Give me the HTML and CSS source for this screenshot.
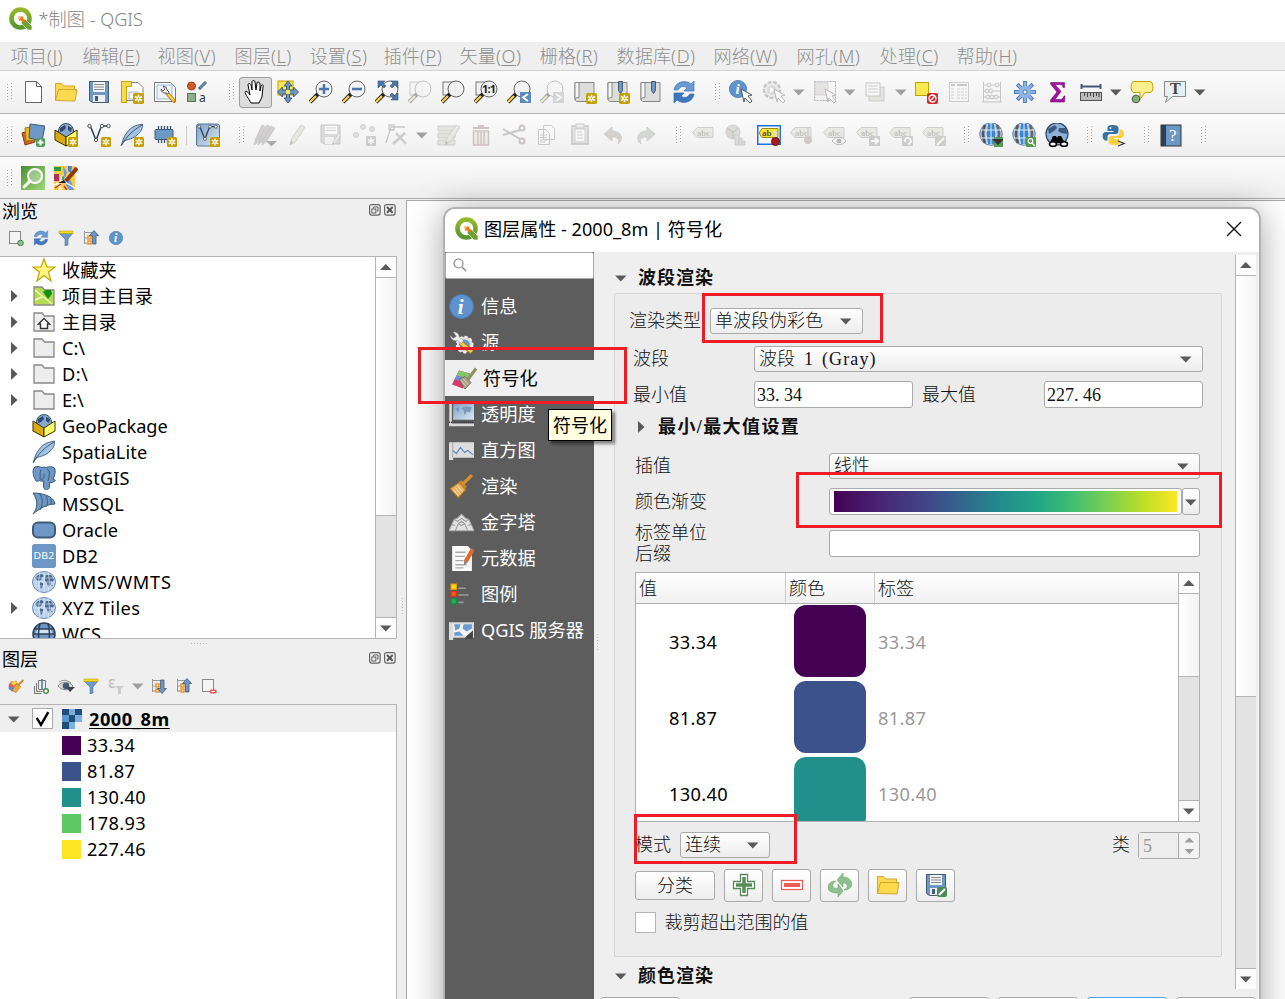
FILE: index.html
```html
<!DOCTYPE html>
<html lang="zh-CN">
<head>
<meta charset="utf-8">
<title>*制图 - QGIS</title>
<link rel="stylesheet" href="styles.css">
</head>
<body>
<svg class="defs" width="0" height="0">
<defs>
<linearGradient id="gq" x1="0" y1="0" x2="0" y2="1"><stop offset="0" stop-color="#95b82a"/><stop offset="1" stop-color="#589632"/></linearGradient>
<linearGradient id="gg" x1="0" y1="0" x2="1" y2="1"><stop offset="0" stop-color="#4d8f35"/><stop offset="1" stop-color="#9fd978"/></linearGradient>
<linearGradient id="gv" x1="0" y1="0" x2="1" y2="1"><stop offset="0" stop-color="#7fa3c9"/><stop offset="1" stop-color="#dbe7f3"/></linearGradient>
<linearGradient id="gs" x1="0" y1="0" x2="1" y2="1"><stop offset="0" stop-color="#ff6"/><stop offset="1" stop-color="#ffee9a"/></linearGradient>
<symbol id="grip" viewBox="0 0 15 24"><path d="M5.500 4v17M9.500 3v17" stroke="#a8a8a8" stroke-dasharray="1 2"/></symbol>
<symbol id="down" viewBox="0 0 12 12"><path d="M0 3.500h11.500l-5.750 6z" fill="#5a5a5a"/></symbol>
<symbol id="downg" viewBox="0 0 12 12"><path d="M0 3.500h11.500l-5.750 6z" fill="#a0a0a0"/></symbol>
<symbol id="up" viewBox="0 0 12 12"><path d="M0 9h11.500l-5.750-6z" fill="#5a5a5a"/></symbol>
<symbol id="right" viewBox="0 0 12 12"><path d="M3 0v12l6.500-6z" fill="#5a5a5a"/></symbol>
<symbol id="star" viewBox="0 0 10 10"><rect width="10" height="10" rx="1.500" fill="#c4a000"/><path d="M5 1.500v7M1.800 3.200l6.400 3.600M8.200 3.200L1.800 6.800" stroke="#fff" stroke-width="1.400"/><circle cx="5" cy="5" r=".8" fill="#c4a000"/></symbol>
<symbol id="q" viewBox="0 0 24 24"><circle cx="11.500" cy="11.500" r="9" fill="none" stroke="url(#gq)" stroke-width="4.600"/><path d="M13 13l3-1 7 7v4h-4l-7-7z" fill="#6f9f35" stroke="#fff" stroke-width=".6"/><path d="M9.500 9.500h5l-.5 1.800 2.500 2.500-2 2-2.500-2.500-2 .7z" fill="#ee7913"/><path d="M9.500 9.500h3l-2.500 3.500z" fill="#f9c46b"/></symbol>
<symbol id="new" viewBox="0 0 24 24"><path d="M4.500 1.500h11l5 5v16h-16zM15.500 1.500v5h5" fill="#fff" stroke="#666"/></symbol>
<symbol id="open" viewBox="0 0 24 24"><path d="M1.500 20.500V3.500h6l2 2.500h11v4h2.500l-2 11z" fill="#fcd94f" stroke="#d4a72c"/><path d="M1.500 20.500L4.500 9.500h18.500" fill="none" stroke="#d4a72c"/></symbol>
<symbol id="save" viewBox="0 0 24 24"><path d="M2.500 1.500h19v21h-16l-3-2z" fill="#6d97c4" stroke="#415a75"/><rect x="6" y="2" width="12" height="10" fill="#f4f4f4"/><path d="M7 4.500h10M7 7h10M7 9.500h10" stroke="#888"/><rect x="6" y="15" width="12" height="7" fill="#eee"/><rect x="8" y="16" width="3" height="5" fill="#415a75"/></symbol>
<symbol id="layout" viewBox="0 0 24 24"><path d="M4 2.500h14l5 5v13H4z" fill="#fff" stroke="#888"/><path d="M1.500 1.500h10v5h-5v16h-5z" fill="#fcd94f" stroke="#c4a000"/><path d="M9 12h9v7H9z" fill="none" stroke="#aab"/><use href="#star" x="13" y="13" width="11" height="11"/></symbol>
<symbol id="mgr" viewBox="0 0 24 24"><path d="M1.500 2.500h16l5 5v14h-21z" fill="#fff" stroke="#777"/><rect x="4" y="5" width="15" height="14" fill="#eef3fa" stroke="#9db7d8"/><path d="M14 13l7 8" stroke="#b8860b" stroke-width="4" stroke-linecap="round"/><path d="M14 13l7 8" stroke="#f0d060" stroke-width="2"/><path d="M8 9a4 4 0 0 0 5 4l2 1 1-2-2-2a4 4 0 0 0-4-4l2 3-2 2z" fill="#eee" stroke="#666"/></symbol>
<symbol id="style" viewBox="0 0 24 24"><circle cx="5.500" cy="6" r="4" fill="#d45a2a" stroke="#9c3f1a"/><path d="M13 9l7-7" stroke="#415a75" stroke-width="3"/><path d="M14 8l6-6" stroke="#6d97c4" stroke-width="1.500"/><rect x="1.500" y="13.500" width="8" height="8" fill="#8cb08c" stroke="#4b7a4b"/><text x="13" y="22" font-size="12" fill="#333">a</text></symbol>
<symbol id="hand" viewBox="0 0 24 24"><path d="M8 23C6 19 2 14 2 12c1-2 3 0 5 3L5 5c0-2 2-2 3 0l1 5V2c0-2 3-2 3 0l1 8 1-7c0-2 3-1 3 1v7l1-5c1-2 3-1 2 1l-1 10-3 6z" fill="#fff" stroke="#000"/></symbol>
<symbol id="panm" viewBox="0 0 24 24"><rect x="2" y="1" width="15" height="14" fill="#fce94f" stroke="#c4a000"/><path d="M12 1l4 5h-2.500v4h4V7l5 5-5 5v-3h-4v4H16l-4 5-4-5h2.500v-4h-4v3l-5-5 5-5v3h4V6H8z" fill="#6d97c4" stroke="#415a75"/><rect x="10" y="10" width="4" height="4" fill="#fce94f"/></symbol>
<symbol id="mag" viewBox="0 0 24 24"><path d="M9 14l-8 8" stroke="#222" stroke-width="4"/><path d="M7 16l-6 6" stroke="#ffd24a" stroke-width="2.300"/><circle cx="15" cy="9" r="8" fill="#f2f2f2" fill-opacity=".9" stroke="#666"/></symbol>
<symbol id="zin" viewBox="0 0 24 24"><use href="#mag"/><path d="M15 4v10M10 9h10" stroke="#4a76ab" stroke-width="2.500"/></symbol>
<symbol id="zout" viewBox="0 0 24 24"><use href="#mag"/><path d="M10 9h10" stroke="#4a76ab" stroke-width="2.500"/></symbol>
<symbol id="zfull" viewBox="0 0 24 24"><use href="#mag"/><path d="M3 1h7L8 3l3 3-2 2-3-3-3 3zM23 1h-7l2 2-3 3 2 2 3-3 3 3zM23 20h-7l2-2-3-3 2-2 3 3 3-3z" fill="#4a76ab" stroke="#2f4f76" stroke-width=".6"/></symbol>
<symbol id="zlay" viewBox="0 0 24 24"><rect x="2" y="2" width="12" height="13" fill="#f1f1f1" stroke="#777"/><use href="#mag"/></symbol>
<symbol id="znat" viewBox="0 0 24 24"><use href="#zlay"/><text x="8" y="13" font-size="11" font-weight="bold" fill="#222" textLength="14">1:1</text></symbol>
<symbol id="zlast" viewBox="0 0 24 24"><use href="#mag"/><rect x="13" y="12" width="11" height="11" fill="#5b8abf"/><path d="M21 14l-5 3.500 5 3.500" fill="none" stroke="#fff" stroke-width="2"/></symbol>
<symbol id="znext" viewBox="0 0 24 24"><use href="#mag"/><rect x="13" y="12" width="11" height="11" fill="#8aa0b5"/><path d="M16 14l5 3.500-5 3.500" fill="none" stroke="#fff" stroke-width="2"/></symbol>
<symbol id="book" viewBox="0 0 24 24"><path d="M2 2.500h19v19H4c-1 0-2-1-2-3z" fill="#ddd" stroke="#888"/><path d="M2 2.500h4v15c-3 0-4 1-4 2z" fill="#f6f6f6" stroke="#888"/></symbol>
<symbol id="bk1" viewBox="0 0 24 24"><use href="#book"/><use href="#star" x="13" y="13" width="11" height="11"/></symbol>
<symbol id="ribbon" viewBox="0 0 24 24"><path d="M12.500 1.500h4v9l-2 3-2-3z" fill="#6d97c4" stroke="#415a75"/></symbol>
<symbol id="bk2" viewBox="0 0 24 24"><use href="#book"/><use href="#ribbon"/><use href="#star" x="13" y="13" width="11" height="11"/></symbol>
<symbol id="bk3" viewBox="0 0 24 24"><use href="#book"/><use href="#ribbon"/></symbol>
<symbol id="refresh" viewBox="0 0 24 24"><path d="M2 10C3 2 13 -1 19 4l3-3v10H12l3-3C11 5 8 7 6 10z" fill="#6a9ad6" stroke="#4577b4" stroke-width=".7"/><path d="M22 14c-1 8-11 11-17 6l-3 3V13h10l-3 3c4 3 7 1 9-2z" fill="#3f78be" stroke="#3568a8" stroke-width=".7"/></symbol>
<symbol id="cursor" viewBox="0 0 24 24"><path d="M12 9l11 6-4 1 4 5-2 2-5-5-1 4z" fill="#fff" stroke="#555"/></symbol>
<symbol id="info" viewBox="0 0 24 24"><circle cx="12" cy="12" r="11.500" fill="#5f93cd" stroke="#4a7ab0"/><text x="8.500" y="19" font-size="20" font-style="italic" font-weight="bold" fill="#fff" class="serif">i</text></symbol>
<symbol id="ident" viewBox="0 0 24 24"><use href="#info" x="0" y="0" width="18" height="18"/><use href="#cursor"/></symbol>
<symbol id="act" viewBox="0 0 24 24"><circle cx="10" cy="10" r="8" fill="#ddd" stroke="#777" stroke-width="2.500" stroke-dasharray="4 1.500"/><circle cx="10" cy="10" r="5" fill="#aaa"/><path d="M8 7l5 3-5 3z" fill="#fff"/><use href="#cursor"/></symbol>
<symbol id="sel" viewBox="0 0 24 24"><rect x="1.500" y="1.500" width="21" height="19" fill="none" stroke="#333" stroke-dasharray="2 1"/><rect x="2" y="2" width="13" height="13" fill="#ccc7ab" stroke="#999"/><use href="#cursor"/></symbol>
<symbol id="selv" viewBox="0 0 24 24"><rect x="5" y="7" width="15" height="14" fill="#cfc9a8" stroke="#888"/><rect x="2" y="3" width="14" height="13" fill="#fafafa" stroke="#777"/><path d="M4 6h10M4 9h10M4 12h10" stroke="#888"/></symbol>
<symbol id="desel" viewBox="0 0 24 24"><rect x="1.500" y="2.500" width="13" height="13" fill="#fce94f" stroke="#c4a000"/><rect x="13" y="13" width="11" height="11" rx="2" fill="#d42a2a"/><circle cx="18.500" cy="18.500" r="3.500" fill="none" stroke="#fff" stroke-width="1.300"/><path d="M16 21l5-5" stroke="#fff" stroke-width="1.300"/></symbol>
<symbol id="tbl" viewBox="0 0 24 24"><rect x="2.500" y="2.500" width="19" height="19" fill="#fafafa" stroke="#888"/><path d="M4 5h4M10 5h10" stroke="#777" stroke-width="2"/><path d="M4 9h4M10 9h10M4 12h4M10 12h10M4 15h4M10 15h10M4 18h4M10 18h10" stroke="#999" stroke-dasharray="3 1"/></symbol>
<symbol id="abac" viewBox="0 0 24 24"><path d="M3.500 2v19M20.500 2v19M2 22h20M3 5h18M3 11h18M3 17h18" stroke="#777" fill="none"/><g fill="#ddd" stroke="#777"><circle cx="9" cy="5" r="2"/><circle cx="17" cy="5" r="2"/><circle cx="7" cy="11" r="2"/><circle cx="11" cy="11" r="2"/><circle cx="8" cy="17" r="2"/><circle cx="12" cy="17" r="2"/><circle cx="16" cy="17" r="2"/></g></symbol>
<symbol id="gear" viewBox="0 0 24 24"><path d="M12 1v22M1 12h22M4.200 4.200l15.600 15.600M19.800 4.200L4.200 19.800" stroke="#4a7dbd" stroke-width="3.800"/><path d="M12 2v20M2 12h20M5 5l14 14M19 5L5 19" stroke="#8db4e2" stroke-width="2"/><circle cx="12" cy="12" r="6" fill="#8db4e2"/><circle cx="12" cy="12" r="2" fill="#fff" stroke="#4a7dbd"/></symbol>
<symbol id="sigma" viewBox="0 0 24 24"><path d="M4.500 2.500h14v5h-1.500c0-2-1-3-3-3H9l6 7-6 8h5c2 0 3-1 4-3.500h1l-.500 6h-14v-2l6.500-8-6.500-8z" fill="#a3129f" stroke="#75106f" stroke-width=".6"/></symbol>
<symbol id="meas" viewBox="0 0 24 24"><path d="M2 6.500h20M2.500 4v5M21.500 4v5" stroke="#415a75" stroke-width="2"/><rect x="1.500" y="12.500" width="21" height="8" fill="#bbb" stroke="#555"/><path d="M5.500 13v3M8.500 13v4M11.500 13v3M14.500 13v4M17.500 13v3M20 13v4" stroke="#444"/></symbol>
<symbol id="tip" viewBox="0 0 24 24"><path d="M4 1.500h16c4 0 4 11 0 11h-5l-5 7v-7H4c-4 0-4-11 0-11z" fill="#fbee8e" stroke="#c4a000"/><circle cx="6" cy="19" r="3.800" fill="#7fb07f" stroke="#4a5a4a"/></symbol>
<symbol id="anno" viewBox="0 0 24 24"><path d="M1.500 1.500h21v15h-13l-7 6 2-6h-3z" fill="#e6eff2" stroke="#888"/><text x="7" y="14" font-size="16" font-weight="bold" fill="#444" class="serif">T</text></symbol>
<symbol id="ds" viewBox="0 0 24 24"><path d="M1 10l10-3 3 12-10 3z" fill="#d0602a" stroke="#8c3a14"/><path d="M4 5l11-2 1 14-11 1z" fill="#f0b81f" stroke="#9c7a10"/><path d="M9 1l15 2-3 15-13-3z" fill="#6d97c4" stroke="#415a75"/><rect x="15" y="15" width="9" height="9" rx="2" fill="#4e9a5a"/><path d="M19.500 16.500v6M16.500 19.500h6" stroke="#fff" stroke-width="2"/></symbol>
<symbol id="gpk" viewBox="0 0 24 24"><circle cx="12" cy="8" r="7.500" fill="#86a8d0" stroke="#31506f"/><path d="M6 5l5-3 1 3-3 3-3 1zM14 3l4 2-1 4-3-2z" fill="#2f4b6c"/><path d="M1 7l11 7v9L1 17z" fill="#d9aa10" stroke="#3c3000"/><path d="M23 7l-11 7v9l11-6z" fill="#ffff70" stroke="#3c3000"/></symbol>
<symbol id="gpkn" viewBox="0 0 24 24"><use href="#gpk"/><use href="#star" x="14" y="14" width="10" height="10"/></symbol>
<symbol id="shp" viewBox="0 0 24 24"><path d="M3 3c2 3 4 10 6 14 2-4 4-12 6-14l6 0" fill="none" stroke="#2e4056" stroke-width="1.500"/><g fill="#fff" stroke="#555"><circle cx="2.500" cy="3" r="1.700"/><circle cx="9" cy="17" r="1.700"/><circle cx="15" cy="3" r="1.700"/><circle cx="21.500" cy="3" r="1.700"/></g></symbol>
<symbol id="shpn" viewBox="0 0 24 24"><use href="#shp"/><use href="#star" x="14" y="14" width="10" height="10"/></symbol>
<symbol id="feather" viewBox="0 0 24 24"><path d="M1.500 22C3 16 6 8 13 4c3-2 6-2 9.500-3 0 6-2 8-4 9.500C15 15 10 16 5 17.500z" fill="#a3c3e4" stroke="#415a75" stroke-width=".9"/><path d="M1 23C6 14 12 8 22 2" fill="none" stroke="#415a75"/></symbol>
<symbol id="feathn" viewBox="0 0 24 24"><use href="#feather"/><use href="#star" x="14" y="14" width="10" height="10"/></symbol>
<symbol id="chip" viewBox="0 0 24 24"><path d="M5.500 3v17M8.500 3v17M11.500 3v17M14.500 3v17M17.500 3v17" stroke="#415a75" stroke-width="1.400"/><rect x="2" y="6.500" width="18" height="10" rx="1" fill="#6d97c4" stroke="#415a75"/><use href="#star" x="14" y="14" width="10" height="10"/></symbol>
<symbol id="virt" viewBox="0 0 24 24"><rect x=".5" y="1" width="23" height="22" rx="2" fill="url(#gv)" stroke="#53769c"/><use href="#shp" x="1" y="1" width="21" height="21"/><use href="#star" x="14" y="14" width="10" height="10"/></symbol>
<symbol id="pen" viewBox="0 0 24 24"><path d="M4 22l2-7L15 2l4 2-9 14z" fill="#d8d0ac" stroke="#888"/><path d="M4 22l1-4 2 2z" fill="#555"/></symbol>
<symbol id="pens" viewBox="0 0 24 24"><g fill="#998a8a" stroke="#777" stroke-width=".8"><path d="M1 22l2-7L9 2l4 2-6 14z"/><path d="M5 22l2-7 7-13 4 2-8 14z"/><path d="M9 22l2-7 7-12 4 2-8 13z"/></g><path d="M13 18h11l-5.500 5.500z" fill="#333"/></symbol>
<symbol id="saved" viewBox="0 0 24 24"><path d="M2 2h19v19H5l-3-2z" fill="#aaa" stroke="#777"/><rect x="6" y="3" width="12" height="8" fill="#fff"/><path d="M7 5h10M7 7.500h10" stroke="#999"/><rect x="6" y="14" width="9" height="7" fill="#eee"/><use href="#pen" x="11" y="9" width="14" height="14"/></symbol>
<symbol id="pts" viewBox="0 0 24 24"><g fill="#bbb" stroke="#888"><circle cx="4" cy="12" r="2.500"/><circle cx="11" cy="4" r="2.500"/><circle cx="20" cy="6" r="2.500"/></g><rect x="14" y="13" width="10" height="10" rx="1" fill="#8a8a70"/><path d="M19 14.500v7M16 16.300l6 3.400M22 16.300l-6 3.400" stroke="#fff" stroke-width="1.400"/></symbol>
<symbol id="vert" viewBox="0 0 24 24"><path d="M1 20L6 4h14M4 2h5v5H4z" fill="none" stroke="#777" stroke-width="1.300"/><path d="M11 10l10 11M20 10L8 21" stroke="#888" stroke-width="2.600"/></symbol>
<symbol id="medit" viewBox="0 0 24 24"><path d="M2 3h17v5H2zM2 10h17v5H2zM2 17h17v5H2z" fill="#c9c5a5" stroke="#888"/><use href="#pen" x="5"/></symbol>
<symbol id="trash" viewBox="0 0 24 24"><path d="M4.500 8h15v14h-15zM9 8v14M12 8v14M15 8v14" fill="#e8d4d4" stroke="#a66" stroke-width="1.500"/><path d="M4 5h16M9 3h6" stroke="#a66" stroke-width="2"/></symbol>
<symbol id="cut" viewBox="0 0 24 24"><path d="M1 6l17 10M1 12l17-5" stroke="#777" stroke-width="2"/><circle cx="20" cy="5" r="2.500" fill="none" stroke="#966" stroke-width="2"/><circle cx="20" cy="18" r="2.500" fill="none" stroke="#966" stroke-width="2"/></symbol>
<symbol id="copy" viewBox="0 0 24 24"><path d="M8.500 2.500h8l3 3v11h-11zM3.500 6.500h7l4 4v11h-11z" fill="#fafafa" stroke="#777"/><path d="M5 12h7M5 14.500h7M5 17h7M5 19h5" stroke="#888"/></symbol>
<symbol id="paste" viewBox="0 0 24 24"><rect x="4" y="3" width="16" height="18" fill="#ccc" stroke="#777" stroke-width="1.500"/><rect x="7" y="6" width="10" height="13" fill="#fff" stroke="#888"/><rect x="8" y="1" width="8" height="4" fill="#ddd" stroke="#777"/><path d="M9 9h5M9 12h6M9 15h6" stroke="#888"/></symbol>
<symbol id="undo" viewBox="0 0 24 24"><path d="M3 11l8-7v4c10 0 12 9 6 13 2-5 0-7-6-7v4z" fill="#a9907c" stroke="#888"/></symbol>
<symbol id="redo" viewBox="0 0 24 24"><path d="M21 11l-8-7v4C3 8 1 17 7 21c-2-5 0-7 6-7v4z" fill="#90a990" stroke="#888"/></symbol>
<symbol id="tag" viewBox="0 0 24 24"><path d="M6 4.500h16v10H6l-4.500-5z" fill="#d6d4a8" stroke="#888"/><text x="6" y="12.500" font-size="8.500" font-weight="bold" fill="#666" class="serif">abc</text></symbol>
<symbol id="diag" viewBox="0 0 24 24"><circle cx="9" cy="9" r="7" fill="#a0b590" stroke="#888"/><path d="M9 9L3 5a7 7 0 0 0 6 11z" fill="#b59a9a"/><path d="M9 9L3 5M9 9l6-4M9 9v7" stroke="#666"/><path d="M11 22V12h4v10zM15 22v-7h3v7zM18 22v-4h3v4z" fill="#9bb" stroke="#888"/></symbol>
<symbol id="pin" viewBox="0 0 24 24"><rect x=".75" y="2.750" width="22.500" height="18.500" fill="#f8fbff" stroke="#1a73e8" stroke-width="1.500"/><path d="M5 5.500h16v9H5L2 10z" fill="#f8e63c" stroke="#a08c00"/><text x="5" y="13" font-size="9" font-weight="bold" fill="#554" class="serif">ab</text><path d="M18.500 8v10" stroke="#ddd" stroke-width="2.500"/><circle cx="18.500" cy="18.500" r="4" fill="#b01818" stroke="#701010"/></symbol>
<symbol id="tpin" viewBox="0 0 24 24"><use href="#tag" x="-1"/><circle cx="18" cy="17" r="4" fill="#a77"/><path d="M18 5v9" stroke="#999" stroke-width="2"/></symbol>
<symbol id="teye" viewBox="0 0 24 24"><use href="#tag" x="-1"/><path d="M9 18c4-5 10-5 14 0-4 5-10 5-14 0z" fill="#fff" stroke="#555"/><circle cx="16" cy="18" r="2.500" fill="#555"/></symbol>
<symbol id="tmov" viewBox="0 0 24 24"><use href="#tag" x="-1"/><rect x="13" y="13" width="11" height="10" fill="#888"/><path d="M15 18h7M19 15l3 3-3 3" fill="none" stroke="#fff" stroke-width="2"/></symbol>
<symbol id="trot" viewBox="0 0 24 24"><use href="#tag" x="-1"/><rect x="13" y="13" width="11" height="10" fill="#888"/><path d="M16 19a3 3 0 1 1 3 2" fill="none" stroke="#fff" stroke-width="2"/></symbol>
<symbol id="tedt" viewBox="0 0 24 24"><use href="#tag" x="-1"/><rect x="13" y="13" width="11" height="10" fill="#8f8e74"/><path d="M15 22l7-7" stroke="#fff" stroke-width="2"/></symbol>
<symbol id="globe" viewBox="0 0 24 24"><circle cx="12" cy="11" r="11.300" fill="#9dbfe6" stroke="#5a7190" stroke-width=".8"/><path d="M8.500 1h7q3 10 0 20h-7q-3-10 0-20z" fill="#3c86d0"/><path d="M6 2q-4 9 0 18" stroke="#555" stroke-width="2.500" fill="none"/><path d="M18 2q4 9 0 18" stroke="#666" stroke-width="2.500" fill="none"/><path d="M1.500 7h21M1.500 15h21M12 0v22M8.500 1q-3 10 0 20M15.500 1q3 10 0 20" stroke="#e4ecf5" fill="none"/></symbol>
<symbol id="gl1" viewBox="0 0 24 24"><use href="#globe"/><rect x="15" y="14" width="9" height="10" fill="#5a9a5a"/><path d="M13 16h12l-6 6z" fill="#333"/></symbol>
<symbol id="gl2" viewBox="0 0 24 24"><use href="#globe"/><rect x="14" y="14" width="10" height="10" rx="1" fill="#4e9a4e"/><circle cx="18.500" cy="18" r="2.300" fill="none" stroke="#fff" stroke-width="1.300"/><path d="M20 20l3 3" stroke="#fff" stroke-width="1.500"/></symbol>
<symbol id="gl3" viewBox="0 0 24 24"><circle cx="12" cy="11" r="11" fill="#8fb0d8" stroke="#2b4564" stroke-width="1.200"/><path d="M3 6l7-4 2 3-3 3-5 3zM14 5l7 0 1 6-6-1-3-2z" fill="#3a5a80"/><path d="M5 20l3-7h3l1 2 1-2h3l4 7z" fill="#000"/><ellipse cx="8" cy="21" rx="3.500" ry="2.300" fill="#fff" stroke="#000" stroke-width="1.600"/><ellipse cx="19" cy="21" rx="3.500" ry="2.300" fill="#fff" stroke="#000" stroke-width="1.600"/></symbol>
<symbol id="py" viewBox="0 0 24 24"><path d="M10.500 2c-4 0-5 1-5 3.500V8h6v1H4c-5 0-4 8-.5 8.500h2V14c0-2 1-3 3-3h5c2 0 3-1 3-3V5c0-2-2-3-6-3z" fill="#3572a5"/><path d="M12.500 22c4 0 5-1 5-3.500V16h-6v-1H19c4 0 4-8 0-8.500h-1.500V10c0 2-1 3-3 3h-5c-2 0-3 1-3 3v3c0 2 2 3 6 3z" fill="#ffd03a"/><circle cx="8.500" cy="5" r="1" fill="#fff"/><path d="M16 18l6 2.500-6 2.500" fill="none" stroke="#333" stroke-width="1.300"/></symbol>
<symbol id="help" viewBox="0 0 24 24"><rect x="2" y="2" width="20" height="21" fill="#6d97c4" stroke="#333"/><rect x="2" y="2" width="5" height="21" fill="#2d3f56"/><text x="10" y="18" font-size="17" fill="#fff" class="serif">?</text></symbol>
<symbol id="osm1" viewBox="0 0 24 24"><rect width="24" height="24" fill="url(#gg)"/><circle cx="14" cy="10" r="7" fill="#fff" fill-opacity=".3" stroke="#fff" stroke-width="2"/><path d="M9 15l-6 6" stroke="#fff" stroke-width="3" stroke-linecap="round"/></symbol>
<symbol id="osm2" viewBox="0 0 24 24"><rect width="21" height="24" fill="#f7cb45"/><path d="M9 0l4 6-2 6 6 3 3 9h-5l-4-7" fill="#6a9be8"/><path d="M14 0l4 0-1 7-3-2z" fill="#4a7fe0"/><path d="M0 1h7v4H0z" fill="#2a9a3a"/><path d="M0 8h5v7H0z" fill="#b03060"/><path d="M7 10h3v4H7z" fill="#3aa0a0"/><path d="M0 19l9-4 12 7M8 9l-3 15M2 17l6 7" stroke="#fff" fill="none" stroke-width="1.200"/><path d="M1 22l6-4M10 20l3 4" stroke="#c0392b" stroke-width="1.500"/><path d="M12 15L23 2" stroke="#8b3a10" stroke-width="4"/><path d="M10 14l-6 3 8 0z" fill="#222"/></symbol>
<symbol id="addl" viewBox="0 0 16 16"><rect x="1.500" y="1.500" width="11" height="12" fill="#f4f4f4" stroke="#888"/><circle cx="12.500" cy="13" r="2.800" fill="#8fbc8f" stroke="#4c8a4c"/></symbol>
<symbol id="filter" viewBox="0 0 16 16"><path d="M1 3h14l-5 6v6l-3 1V9z" fill="#6d97c4" stroke="#53769c" stroke-width=".6"/><path d="M1 1h14v2.500H1z" fill="#f2dc2a" stroke="#c4a000" stroke-width=".6"/></symbol>
<symbol id="tree" viewBox="0 0 16 16"><path d="M1.500 1v13M1 2.500h12M2 8h3M2 13h3" stroke="#999" fill="none"/><path d="M5 6h3v3H5zM5 11h3v3H5z" fill="#fff" stroke="#f0932a" stroke-width="1.500"/></symbol>
<symbol id="coll" viewBox="0 0 16 16"><use href="#tree"/><path d="M11 .5l4.500 5H13V14H9.500V5.500H6.500z" fill="#6d97c4" stroke="#415a75" stroke-width=".8"/></symbol>
<symbol id="expa" viewBox="0 0 16 16"><use href="#tree"/><path d="M11 15.500l4.500-5H13V2H9.500v8.500H6.500z" fill="#6d97c4" stroke="#415a75" stroke-width=".8"/></symbol>
<symbol id="reml" viewBox="0 0 16 16"><rect x="1.500" y="1.500" width="11" height="12" fill="#f4f4f4" stroke="#888"/><rect x="9" y="11.500" width="6.500" height="4" rx="1" fill="#f05a5a"/><path d="M10.500 13.500h3.500" stroke="#fff"/></symbol>
<symbol id="brush" viewBox="0 0 24 24"><path d="M1 10l4-5 8-1 1 9-6 6-7-2z" fill="#e85a5a"/><path d="M4 7l5-3 5 2-5 6z" fill="#f5d33a"/><path d="M1 14l4-2 4 5-3 4z" fill="#4a90d8"/><path d="M9 13l5-5 5 5-7 9-5-3z" fill="#e8a93c" stroke="#a8741c" stroke-width=".8"/><path d="M15 11l8-8" stroke="#c08a2a" stroke-width="3"/></symbol>
<symbol id="sym" viewBox="0 0 26 24"><path d="M1 18L8 4l11 3-7 15z" fill="#d43a6a"/><path d="M5.500 9L8 4l11 3-2.500 5z" fill="#7cc86a"/><path d="M3.500 13l2-4 11 3-2 4z" fill="#6a8ee0"/><path d="M8 13l6-3 6 6-6 6.500z" fill="#a8a288" stroke="#777058"/><path d="M10 14l5 6M12 12l5 6" stroke="#d0ccb8"/><path d="M17 13l8-11" stroke="#8e9064" stroke-width="3"/></symbol>
<symbol id="grp" viewBox="0 0 16 16"><path d="M5.500 2.500h7v9h-7zM3.500 5v8.500h6M1.500 8v7.500h7" fill="none" stroke="#777"/><path d="M9 1v10" stroke="#4a76ab" stroke-width="1.500"/><circle cx="13" cy="13" r="2.300" fill="#fff" stroke="#4c8a4c" stroke-width="1.500"/></symbol>
<symbol id="eye" viewBox="0 0 18 16"><path d="M1 8c4-5 11-5 15 0-4 5-11 5-15 0z" fill="#ddd" stroke="#888"/><circle cx="9" cy="8" r="3.300" fill="#415a75"/><path d="M2 4q6-4 12 1" fill="none" stroke="#999"/><path d="M9 9h9l-5 5z" fill="#444"/></symbol>
<symbol id="eps" viewBox="0 0 16 16"><text x="0" y="10" font-size="16" fill="#bbb">ε</text><path d="M7 8h9l-3 3v5h-3v-5z" fill="#ccc"/></symbol>
<symbol id="fav" viewBox="0 0 24 24"><path d="M12 1l3 8h8l-6.500 5 2.500 9-7-5.500L5 23l2.500-9L1 9h8z" fill="url(#gs)" stroke="#c4a000" stroke-width="1.200"/></symbol>
<symbol id="fold" viewBox="0 0 24 24"><path d="M2 21V3h8l2.500 3H22v15z" fill="#ededed" stroke="#888" stroke-width="1.300"/></symbol>
<symbol id="pfold" viewBox="0 0 24 24"><path d="M2 21V3h8l2.500 3H22v15z" fill="#b5dc50" stroke="#888" stroke-width="1.300"/><path d="M3 6l17 14M3 16l7-3" stroke="#eef8c8" stroke-width="1.500"/><path d="M11 8l3-2h5l1 4-4 5z" fill="#119011"/></symbol>
<symbol id="hfold" viewBox="0 0 24 24"><use href="#fold"/><path d="M6.500 14L12 8.500l5.500 5.500H15.500v4.500h-7V14z" fill="#fff" stroke="#333" stroke-width="1.400"/></symbol>
<symbol id="pg" viewBox="0 0 24 24"><path d="M3 1c3-1 5 0 7 0.500 1-.5 3-.5 4 0 3-1 7-1 8.500.5 1.500 3 .5 7-1.500 11l2.500 1.500-3 2-3 0v5c-1 3-5 3-6 0v-7c-1 1-3 1-4 0l-3 1C2 13-1 4 3 1z" fill="#6d97c4" stroke="#415a75"/><path d="M9 4c-2 3 0 6-1 9 2 1 4 0 4-3V8M15 3c4 2 2 7 1 12" fill="none" stroke="#415a75"/></symbol>
<symbol id="ms" viewBox="0 0 24 24"><path d="M1 1c9 0 21 3 22 11-8 0-16 5-22 10C6 16 6 8 1 1z" fill="#6d97c4" stroke="#415a75"/><path d="M8 2c3 5 3 11 0 16M14 4c2 4 2 8 0 11M19 7v6" fill="none" stroke="#415a75"/></symbol>
<symbol id="ora" viewBox="0 0 24 24"><rect x="1" y="4.500" width="22" height="15" rx="5" fill="#6d97c4" stroke="#415a75" stroke-width="2"/></symbol>
<symbol id="db2" viewBox="0 0 24 24"><rect width="24" height="24" rx="3" fill="#6d97c4"/><text x="1.500" y="15" font-size="9" fill="#fff" textLength="21" lengthAdjust="spacingAndGlyphs">DB2</text></symbol>
<symbol id="wms" viewBox="0 0 24 24"><ellipse cx="12" cy="12" rx="11.500" ry="10.500" fill="#b9d0ea" stroke="#6d8db2"/><path d="M3 8l3-3 4-1 2 2-2 2-1 2-3 1zM8 12l3 1 0 3-2 3-1-3zM14 5l5 0 3 4-1 3-2-1-1 5-2 1-1-4-2-2 0-3zM19 15l2 0-1 2z" fill="#4c6b93"/><path d="M2 8h20M1 12h22M2 16h20M8 2q-3 10 0 20M12 2v20M16 2q3 10 0 20" fill="none" stroke="#e4eef9" stroke-width=".6"/></symbol>
<symbol id="wcs" viewBox="0 0 24 24"><circle cx="12" cy="12" r="11" fill="#6d97c4" stroke="#2d4059" stroke-width="1.500"/><path d="M5 7h14l1 5H4z" fill="#d5e3f3"/><path d="M2 7h20M1 12h22M8 2q-3 10 0 20M16 2q3 10 0 20" fill="none" stroke="#2d4059" stroke-width="1.500"/></symbol>
<symbol id="raster" viewBox="0 0 20 20"><rect width="20" height="20" fill="#7db0e0"/><path d="M0 0h7v6H0zM13 0h7v6h-7zM7 6h6v7H7zM0 13h7v7H0z" fill="#1f4e79"/><path d="M13 13h7v7h-7z" fill="#efefef"/><path d="M0 6h7v7H0z" fill="#5b95cc"/></symbol>
<symbol id="src" viewBox="0 0 24 24"><circle cx="15" cy="14" r="7.500" fill="#ddd" stroke="#eee" stroke-width="2" stroke-dasharray="3 2"/><circle cx="15" cy="14" r="5" fill="#6d97c4"/><path d="M11 12l11 9" stroke="#a88520" stroke-width="5"/><path d="M11 12l11 9" stroke="#eacb5a" stroke-width="3"/><path d="M1 5c1 5 5 6 7 5l4 3 2-3-4-3c0-3-3-6-6-5l3 4-3 2z" fill="#eee" stroke="#777" stroke-width=".5"/></symbol>
<symbol id="trans" viewBox="0 0 24 24"><path d="M1.500 1v21M0 22h24" stroke="#d8d8d8" stroke-width="2.500"/><rect x="4" y="2" width="20" height="15" fill="url(#gv)"/><path d="M12 6l4-2 6 1-2 5-3-1-2 4-1-5zM6 6l4-1-1 5z" fill="#7d97b8"/><path d="M0 19.500h24" stroke="#334" stroke-width="1.500" stroke-dasharray="1 1"/></symbol>
<symbol id="hist" viewBox="0 0 24 24"><path d="M0 4h24v15H4v2H0z" fill="#ddd"/><path d="M3.500 4v15" stroke="#aaa"/><path d="M4 12l3 3 4-6 4 5 3-2 5 4" fill="none" stroke="#5d87b8" stroke-width="1.100"/></symbol>
<symbol id="rend" viewBox="0 0 24 24"><path d="M1 14l9-6 6 7-7 8z" fill="#e8b060" stroke="#a8741c"/><path d="M4 15l5 6M6 13l5 6M8 11l5 6" stroke="#f6d9a0"/><path d="M9 8l3-2 5 6-2 3z" fill="#c4842a"/><path d="M13 10l9-9" stroke="#d8902a" stroke-width="3"/></symbol>
<symbol id="pyr" viewBox="0 0 24 24"><path d="M0 20L5 9l3-1 4-4 4 4 3 1 5 11z" fill="#e2e2e2" stroke="#aaa"/><path d="M5 9l3 2 4-3 4 3 3-2M3 14l3 1M21 14l-3 1M6 20l3-7 3-2 3 2 3 7M9 13l3 2 3-2" fill="none" stroke="#999"/></symbol>
<symbol id="meta" viewBox="0 0 24 24"><path d="M3 0h15l4 4v20H3z" fill="#fafafa"/><path d="M6 6h10M6 10h9M6 14h8M6 18h11M6 21h8" stroke="#aaa" stroke-width="1.300"/><path d="M16 15l7-12" stroke="#e0682a" stroke-width="4"/><path d="M14.500 18l0-4 3 2z" fill="#777"/></symbol>
<symbol id="leg" viewBox="0 0 24 24"><rect x="2" y="2" width="5" height="5" fill="#ffd800" stroke="#e8a010"/><rect x="2" y="9" width="5" height="5" fill="#ff5a10" stroke="#d8301a"/><rect x="2" y="16" width="5" height="5" fill="#1ab84a" stroke="#108a4a"/><path d="M9 6h7M9 12.500h10M9 19.500h5" stroke="#999" stroke-width="1.600"/></symbol>
<symbol id="serv" viewBox="0 0 24 24"><path d="M0 4h24v15H4v2H0z" fill="#ddd"/><rect x="4" y="6" width="18" height="11" fill="#f4f4f4"/><path d="M5 6h6l-1 4-4 2zM14 6h8v4l-5 3-4-3zM5 14l5-1 4 4H5z" fill="#6d9bd0"/><path d="M23 12v8h-8l2-3z" fill="#444"/></symbol>
<symbol id="look" viewBox="0 0 14 14"><circle cx="5.500" cy="5.500" r="4.500" fill="none" stroke="#888" stroke-width="1.200"/><path d="M9 9l4 4" stroke="#888" stroke-width="1.500"/></symbol>
<symbol id="float" viewBox="0 0 12 12"><rect x=".6" y=".6" width="10.500" height="10.500" rx="2" fill="none" stroke="#666" stroke-width="1.200"/><rect x="2.800" y="5" width="4" height="4" fill="none" stroke="#666"/><path d="M4.500 4.500V3h4.500v4H7.500" fill="none" stroke="#666"/></symbol>
<symbol id="close" viewBox="0 0 12 12"><rect x=".6" y=".6" width="10.500" height="10.500" rx="2" fill="none" stroke="#666" stroke-width="1.200"/><path d="M3 3l5.700 5.700M8.700 3L3 8.700" stroke="#555" stroke-width="2"/></symbol>
<symbol id="plus" viewBox="0 0 24 24"><path d="M8.500 1.500h7v7h7v7h-7v7h-7v-7h-7v-7h7z" fill="#fff" stroke="#5a8c5a" stroke-width="1.300"/><path d="M12 4v16M4 12h16" stroke="#5a8c5a" stroke-width="3.500"/></symbol>
<symbol id="minus" viewBox="0 0 24 24"><rect x="1.500" y="7.500" width="21" height="9" fill="#fff" stroke="#ef5b5b" stroke-width="1.200"/><path d="M4 12h16" stroke="#ef5b5b" stroke-width="4"/></symbol>
<symbol id="cycle" viewBox="0 0 24 24"><path d="M15 0v4c6 0 9 4 9 8-1 3-4 5-8 5 3-2 4-4 3-5-1-2-2-2-4-2v4l-6-7z" fill="#8fbf8f" stroke="#6fa56f" stroke-width=".6"/><path d="M10 24v-4c-5 0-10-1-10-6 0-3 3-6 8-6-3 2-4 4-3 6 1 1 3 2 5 1v-4l5 7z" fill="#8fbf8f" stroke="#6fa56f" stroke-width=".6"/></symbol>
<symbol id="savee" viewBox="0 0 24 24"><use href="#save"/><rect x="13" y="14" width="10" height="10" rx="2" fill="#4e8a56"/><path d="M15 22l6-6" stroke="#fff" stroke-width="2"/></symbol>
</defs>
</svg>
<div class="app">
  <header class="title"><svg class="t"><use href="#q"/></svg><span>*制图 - QGIS</span></header>
  <nav class="menu"><span>项目(<u>J</u>)</span><span>编辑(<u>E</u>)</span><span>视图(<u>V</u>)</span><span>图层(<u>L</u>)</span><span>设置(<u>S</u>)</span><span>插件(<u>P</u>)</span><span>矢量(<u>O</u>)</span><span>栅格(<u>R</u>)</span><span>数据库(<u>D</u>)</span><span>网络(<u>W</u>)</span><span>网孔(<u>M</u>)</span><span>处理(<u>C</u>)</span><span>帮助(<u>H</u>)</span></nav>
  <div class="bar">
    <div class="set"><svg class="grip"><use href="#grip"/></svg><svg class="t"><use href="#new"/></svg><svg class="t"><use href="#open"/></svg><svg class="t"><use href="#save"/></svg><svg class="t"><use href="#layout"/></svg><svg class="t"><use href="#mgr"/></svg><svg class="t"><use href="#style"/></svg></div>
    <div class="set"><svg class="grip"><use href="#grip"/></svg><span class="pressed"><svg class="t"><use href="#hand"/></svg></span><svg class="t"><use href="#panm"/></svg><svg class="t"><use href="#zin"/></svg><svg class="t"><use href="#zout"/></svg><svg class="t"><use href="#zfull"/></svg><svg class="t off"><use href="#zlay"/></svg><svg class="t"><use href="#zlay"/></svg><svg class="t"><use href="#znat"/></svg><svg class="t"><use href="#zlast"/></svg><svg class="t off"><use href="#znext"/></svg><svg class="t"><use href="#bk1"/></svg><svg class="t"><use href="#bk2"/></svg><svg class="t"><use href="#bk3"/></svg><svg class="t"><use href="#refresh"/></svg></div>
    <div class="set"><svg class="grip"><use href="#grip"/></svg><svg class="t"><use href="#ident"/></svg><svg class="t off"><use href="#act"/></svg><svg class="dd"><use href="#downg"/></svg><svg class="t off"><use href="#sel"/></svg><svg class="dd"><use href="#downg"/></svg><svg class="t off"><use href="#selv"/></svg><svg class="dd"><use href="#downg"/></svg><svg class="t"><use href="#desel"/></svg><svg class="t off"><use href="#tbl"/></svg><svg class="t off"><use href="#abac"/></svg><svg class="t"><use href="#gear"/></svg><svg class="t"><use href="#sigma"/></svg><svg class="t"><use href="#meas"/></svg><svg class="dd"><use href="#down"/></svg><svg class="t"><use href="#tip"/></svg><svg class="t"><use href="#anno"/></svg><svg class="dd"><use href="#down"/></svg></div>
  </div>
  <div class="bar">
    <div class="set"><svg class="grip"><use href="#grip"/></svg><svg class="t"><use href="#ds"/></svg><svg class="t"><use href="#gpkn"/></svg><svg class="t"><use href="#shpn"/></svg><svg class="t"><use href="#feathn"/></svg><svg class="t"><use href="#chip"/></svg><i class="sep"></i><svg class="t"><use href="#virt"/></svg></div>
    <div class="set"><svg class="grip"><use href="#grip"/></svg><svg class="t off"><use href="#pens"/></svg><svg class="t off"><use href="#pen"/></svg><svg class="t off"><use href="#saved"/></svg><svg class="t off"><use href="#pts"/></svg><svg class="t off"><use href="#vert"/></svg><svg class="dd"><use href="#downg"/></svg><svg class="t off"><use href="#medit"/></svg><svg class="t off"><use href="#trash"/></svg><svg class="t off"><use href="#cut"/></svg><svg class="t off"><use href="#copy"/></svg><svg class="t off"><use href="#paste"/></svg><svg class="t off"><use href="#undo"/></svg><svg class="t off"><use href="#redo"/></svg></div>
    <div class="set"><svg class="grip"><use href="#grip"/></svg><svg class="t off"><use href="#tag"/></svg><svg class="t off"><use href="#diag"/></svg><svg class="t"><use href="#pin"/></svg><svg class="t off"><use href="#tpin"/></svg><svg class="t off"><use href="#teye"/></svg><svg class="t off"><use href="#tmov"/></svg><svg class="t off"><use href="#trot"/></svg><svg class="t off"><use href="#tedt"/></svg></div>
    <div class="set"><svg class="grip"><use href="#grip"/></svg><svg class="t"><use href="#gl1"/></svg><svg class="t"><use href="#gl2"/></svg><svg class="t"><use href="#gl3"/></svg></div>
    <div class="set"><svg class="grip"><use href="#grip"/></svg><svg class="t"><use href="#py"/></svg></div>
    <div class="set"><svg class="grip"><use href="#grip"/></svg><svg class="t"><use href="#help"/></svg></div>
    <div class="set"><svg class="grip"><use href="#grip"/></svg></div>
  </div>
  <div class="bar third">
    <div class="set"><svg class="grip"><use href="#grip"/></svg><svg class="t"><use href="#osm1"/></svg><svg class="t"><use href="#osm2"/></svg></div>
  </div>
  <main class="work">
    <aside class="docks">
      <section class="dock browse">
        <div class="dhead"><span>浏览</span><svg><use href="#float"/></svg><svg><use href="#close"/></svg></div>
        <div class="dtools"><svg><use href="#addl"/></svg><svg><use href="#refresh"/></svg><svg><use href="#filter"/></svg><svg><use href="#coll"/></svg><svg class="inf"><use href="#info"/></svg></div>
        <div class="dlist">
          <ul class="tree">
            <li><i></i><svg class="ic"><use href="#fav"/></svg>收藏夹</li>
            <li><svg class="ar"><use href="#right"/></svg><svg class="ic"><use href="#pfold"/></svg>项目主目录</li>
            <li><svg class="ar"><use href="#right"/></svg><svg class="ic"><use href="#hfold"/></svg>主目录</li>
            <li><svg class="ar"><use href="#right"/></svg><svg class="ic"><use href="#fold"/></svg>C:\</li>
            <li class="s1"><svg class="ar"><use href="#right"/></svg><svg class="ic"><use href="#fold"/></svg>D:\</li>
            <li><svg class="ar"><use href="#right"/></svg><svg class="ic"><use href="#fold"/></svg>E:\</li>
            <li><i></i><svg class="ic"><use href="#gpk"/></svg>GeoPackage</li>
            <li class="s0"><i></i><svg class="ic"><use href="#feather"/></svg>SpatiaLite</li>
            <li class="s0"><i></i><svg class="ic"><use href="#pg"/></svg>PostGIS</li>
            <li class="s1"><i></i><svg class="ic"><use href="#ms"/></svg>MSSQL</li>
            <li class="s0"><i></i><svg class="ic"><use href="#ora"/></svg>Oracle</li>
            <li class="s0"><i></i><svg class="ic"><use href="#db2"/></svg>DB2</li>
            <li class="s2"><i></i><svg class="ic"><use href="#wms"/></svg>WMS/WMTS</li>
            <li class="s1"><svg class="ar"><use href="#right"/></svg><svg class="ic"><use href="#wms"/></svg>XYZ Tiles</li>
            <li class="s1"><i></i><svg class="ic"><use href="#wcs"/></svg>WCS</li>
          </ul>
          <div class="vs"><b><svg><use href="#up"/></svg></b><i class="thumb th1"></i><i class="track"></i><b><svg><use href="#down"/></svg></b></div>
        </div>
      </section>
      <div class="hsplit"></div>
      <section class="dock layers">
        <div class="dhead"><span>图层</span><svg><use href="#float"/></svg><svg><use href="#close"/></svg></div>
        <div class="dtools"><svg><use href="#brush"/></svg><svg><use href="#grp"/></svg><svg class="wide"><use href="#eye"/></svg><svg><use href="#filter"/></svg><svg><use href="#eps"/></svg><svg class="tiny"><use href="#downg"/></svg><svg><use href="#expa"/></svg><svg><use href="#coll"/></svg><svg><use href="#reml"/></svg></div>
        <div class="llist">
          <div class="layer"><svg class="ar"><use href="#down"/></svg><span class="chk"><svg viewBox="0 0 18 18"><path d="M3.500 8.500l4 6.500 7-12" fill="none" stroke="#000" stroke-width="2.300"/></svg></span><svg class="ras"><use href="#raster"/></svg><b>2000_8m</b></div>
          <div class="leg"><i class="c1"></i>33.34</div>
          <div class="leg"><i class="c2"></i>81.87</div>
          <div class="leg"><i class="c3"></i>130.40</div>
          <div class="leg"><i class="c4"></i>178.93</div>
          <div class="leg"><i class="c5"></i>227.46</div>
        </div>
      </section>
    </aside>
    <div class="vsplit"></div>
    <div class="canvas"></div>
  </main>

  <div class="dialog">
    <div class="dtitle"><svg class="t"><use href="#q"/></svg><span>图层属性 - 2000_8m | 符号化</span><svg class="x" viewBox="0 0 16 16"><path d="M1 1l14 14M15 1L1 15" stroke="#111" stroke-width="1.400"/></svg></div>
    <div class="dbody">
      <div class="side">
        <div class="search"><svg><use href="#look"/></svg></div>
        <ul>
          <li><svg><use href="#info"/></svg>信息</li>
          <li><svg><use href="#src"/></svg>源</li>
          <li class="on"><svg><use href="#sym"/></svg>符号化</li>
          <li><svg><use href="#trans"/></svg>透明度</li>
          <li><svg><use href="#hist"/></svg>直方图</li>
          <li><svg><use href="#rend"/></svg>渲染</li>
          <li><svg><use href="#pyr"/></svg>金字塔</li>
          <li><svg><use href="#meta"/></svg>元数据</li>
          <li><svg><use href="#leg"/></svg>图例</li>
          <li><svg><use href="#serv"/></svg>QGIS 服务器</li>
        </ul>
      </div>
      <div class="content">
        <div class="view">
          <div class="pane">
            <h2><svg><use href="#down"/></svg>波段渲染</h2>
            <div class="group">
              <div class="r r1"><label>渲染类型</label><div class="combo w153">单波段伪彩色<svg><use href="#down"/></svg></div></div>
              <div class="r r2"><label>波段</label><div class="combo w449"><span class="lat">波段 1 <em>(Gray)</em></span><svg><use href="#down"/></svg></div></div>
              <div class="r r3"><label>最小值</label><div class="inp w159">33<em>.</em>34</div><label class="mx">最大值</label><div class="inp w159">227<em>.</em>46</div></div>
              <div class="r r4"><svg><use href="#right"/></svg><b>最小/最大值设置</b></div>
              <div class="r r5"><label>插值</label><div class="combo w371">线性<svg><use href="#down"/></svg></div></div>
              <div class="r r6"><label>颜色渐变</label><div class="ramp"><i></i></div><div class="rbtn"><svg><use href="#down"/></svg></div></div>
              <div class="r r7"><label>标签单位<br>后缀</label><div class="inp w371"></div></div>
              <div class="table">
                <div class="cols">
                  <div class="thead"><span>值</span><span>颜色</span><span>标签</span></div>
                  <div class="trow"><span>33.34</span><i class="c1"></i><span>33.34</span></div>
                  <div class="trow"><span>81.87</span><i class="c2"></i><span>81.87</span></div>
                  <div class="trow"><span>130.40</span><i class="c3"></i><span>130.40</span></div>
                </div>
                <div class="vs"><b><svg><use href="#up"/></svg></b><i class="thumb th2"></i><i class="track"></i><b><svg><use href="#down"/></svg></b></div>
              </div>
              <div class="r r8"><label>模式</label><div class="combo w90">连续<svg><use href="#down"/></svg></div><label class="cls">类</label><div class="spin"><span>5</span><div><svg><use href="#up"/></svg><svg><use href="#down"/></svg></div></div></div>
              <div class="r r9"><div class="btn txt">分类</div><div class="btn"><svg><use href="#plus"/></svg></div><div class="btn"><svg><use href="#minus"/></svg></div><div class="btn"><svg><use href="#cycle"/></svg></div><div class="btn"><svg><use href="#open"/></svg></div><div class="btn"><svg><use href="#savee"/></svg></div></div>
              <div class="r r10"><i class="cb"></i><span>裁剪超出范围的值</span></div>
            </div>
            <h2 class="second"><svg><use href="#down"/></svg>颜色渲染</h2>
          </div>
          <div class="vs big"><b><svg><use href="#up"/></svg></b><i class="thumb th3"></i><i class="track"></i><b><svg><use href="#down"/></svg></b></div>
        </div>
        <div class="foot"><i></i><i class="push"></i><i></i><i class="def"></i><i></i></div>
      </div>
    </div>
  </div>
  <div class="sidegrip"></div>
  <div class="mark m1"></div><div class="mark m2"></div><div class="mark m3"></div><div class="mark m4"></div>
  <div class="tooltip">符号化</div>
</div>
</body>
</html>
```
FILE: styles.css
```css
*{box-sizing:border-box}
body{margin:0;background:#efefef;font:18.2px/26px "Noto Sans","Noto Sans CJK SC",sans-serif;color:#000;overflow:hidden}
ul{list-style:none;margin:0;padding:0}
i,em{font-style:normal}
svg{flex:none;display:block}
.defs{position:absolute}
.serif{font-family:"Liberation Serif",serif}
.app{position:relative;width:1285px;height:999px;overflow:hidden;display:flex;flex-direction:column;white-space:nowrap}
.title{height:42px;flex:none;background:#fff;display:flex;align-items:center;padding:0 0 4px 4px;color:#858585;font-size:18.2px;font-weight:300}
.title .t{margin-right:6px}
.menu{height:28px;flex:none;display:grid;grid-template-columns:72px 75px 77px 75px 74px 76px 80px 77px 97px 83px 83px 77px 80px;padding-left:10.5px;line-height:29px;color:#8f8f8f;font-weight:300;font-size:18.2px;background:#efefef}
.menu u{text-underline-offset:2px;text-decoration-thickness:1px;letter-spacing:.5px;padding-left:.5px}
.bar{height:43px;flex:none;border-top:1px solid #b5b5b5;background:linear-gradient(#fbfbfb,#efefef);display:flex;align-items:center;padding-left:1.5px}
.menu + .bar{border-top-color:#d2d2d2}
.bar.third{border-bottom:1px solid #b0b0b0}
.set{display:flex;align-items:center;margin-right:9px}
.t{width:24px;height:24px;margin:0 4.5px}
.off{opacity:.36;filter:grayscale(.6)}
.grip{width:15px;height:24px}
.dd{width:12px;height:12px;margin:0 3.2px 0 2.6px}
.sep{width:1px;height:19px;background:#ccc;margin:0 4.5px}
.pressed{width:33px;height:31px;margin:0;border:1px solid #9e9e9e;border-radius:3px;background:#dcdcdc;display:flex;align-items:center}
.pressed .t{margin:0 3.5px}
.work{flex:1;display:flex;min-height:0}
.docks{width:397px;display:flex;flex-direction:column}
.dhead{height:26px;display:flex;align-items:center;padding:0 1px 0 2px;gap:3px}
.dhead span{flex:1;font-size:18px;margin-top:-2px}
.dhead svg{width:12px;height:12px;margin-top:-4px}
.dtools{height:31px;display:flex;align-items:center;padding:0 0 6px 8px;gap:9px}
.dtools svg{width:16px;height:16px}
.dtools .inf{width:14px;height:14px;margin:0 1px}
.dtools .wide{width:18px;margin:0 -1px}
.dtools .tiny{width:12px;margin:0 -1.5px}
.dlist{height:383px;border:1px solid #b4b4b4;border-left:0;background:#fff;display:flex;overflow:hidden}
.tree{flex:1}
.tree li{height:26px;display:flex;align-items:center}
.tree .s0{letter-spacing:.15px}
.tree .s1{letter-spacing:.42px}
.tree .s2{letter-spacing:.75px}
.tree li>i,.ar{width:12px;height:12px;margin:0 12px 0 8px}
.ic{width:24px;height:24px;margin-right:6px}
.vs{width:21px;border-left:1px solid #b4b4b4;display:flex;flex-direction:column;background:#fcfcfc}
.vs b{height:20px;flex:none;display:flex;align-items:center;justify-content:center;padding-bottom:1px}
.vs b svg,.rbtn svg{width:12px;height:12px}
.thumb{border:solid #b4b4b4;border-width:1px 0;background:linear-gradient(90deg,#fff,#f3f3f3)}
.track{flex:1;background:#e3e3e3;border-bottom:1px solid #b4b4b4}
.th1{height:239px}
.th2{height:84px}
.hsplit{height:8px;background:repeating-linear-gradient(90deg,#bbb 0 1px,transparent 1px 3px) 191px 4px/17px 1px no-repeat}
.llist{border-top:1px solid #b4b4b4;border-right:1px solid #b4b4b4;background:#fff;flex:1}
.layers{flex:1;display:flex;flex-direction:column}
.layer{height:27px;display:flex;align-items:center;background:#efefef}
.layer .ar{margin-right:12px}
.layer b{text-decoration:underline;text-underline-offset:2px;letter-spacing:.5px}
.chk{width:21px;height:21px;border:1px solid #aaa;background:#fff;margin-right:9px}
.ras{width:20px;height:20px;margin-right:7px}
.leg{height:26px;display:flex;align-items:center;padding-left:62px;letter-spacing:.35px}
.leg i{width:19px;height:19px;margin-right:6px}
.c1{background:#440154}.c2{background:#3b528b}.c3{background:#21908d}.c4{background:#5dc963}.c5{background:#fde725}
.vsplit{width:9px;background:repeating-linear-gradient(#bbb 0 1px,transparent 1px 3px) 5px 399px/1px 16px no-repeat}
.canvas{flex:1;margin-top:1px;border:solid #a9a9a9;border-width:1px 0 0 1px;background:#fff}
.dialog{position:absolute;left:443px;top:207px;width:818px;height:840px;border:2px solid #b2b2b2;border-radius:12px;background:#efefef;box-shadow:0 3px 34px rgba(0,0,0,.36);overflow:hidden}
.dtitle{height:43px;background:#fff;display:flex;align-items:center;padding:0 17px 3px 5px}
.dtitle .t{margin-right:5.5px}
.dtitle span{flex:1;font-size:18.1px}
.x{width:16px;height:16px}
.dbody{display:flex;height:797px}
.side{width:149px;background:#5d5d5d;color:#fff;font-size:18.2px}
.search{height:27px;background:#fff;border:1px solid #aaa;border-radius:2px;padding:5px 7px;margin-bottom:9px}
.search svg{width:14px;height:14px}
.side li{height:36px;display:flex;align-items:center;padding-left:4px}
.side li svg{width:25px;height:25px;margin-right:7px}
.side .on{background:#efefef;color:#000;padding-left:6px}
.side .on svg{width:26px;margin-right:6px}
.content{width:665px;font-size:18px;font-family:"Liberation Serif","Noto Sans CJK SC",serif;font-weight:300;color:#111}
.view{display:flex;height:738px}
.pane{width:641px;padding-left:20px;overflow:hidden}
h2{margin:11px 0 0;height:30px;display:flex;align-items:center;font-size:18px;font-weight:700;letter-spacing:1px;color:#111;padding-left:1px}
h2 svg{width:12px;height:12px;margin-right:11px}
.second{margin-top:4px}
.group{width:608px;height:664px;border:1px solid #d6d6d6;border-radius:2px;background:#ececec;padding-top:9px}
.r{display:flex;align-items:center;padding-left:20px}
.r1{height:36px;padding-left:14px}.r1 label{width:81px}
.r2{height:40px;padding-left:18px}.r2 label{width:121px}
.r3{height:31px;padding-left:18px}.r3 label{width:121px}.r3 .mx{width:122px;margin-left:9px}
.r4{height:34px}.r4 svg{width:12px;height:12px;margin-right:11px}.r4 b{font-weight:700;letter-spacing:1.4px;color:#111}
.r5{height:44px}.r5 label,.r6 label,.r7 label{width:194px}
.r6{height:27px}
.r7{height:57px}.r7 label{line-height:21px}
.r8{height:46px}.r8 label{width:45px}.r8 .cls{margin-left:342px;width:26px}
.r9{height:35px;gap:9px}
.r10{height:39px}
.combo{height:26px;border:1px solid #aaa;border-radius:3px;background:linear-gradient(#fff,#ededed);display:flex;align-items:center;padding:0 10px 0 4px;line-height:24px}
.combo svg{width:12px;height:12px;margin-left:auto}
.lat{word-spacing:4.5px;font-weight:400}
.lat::first-letter{font-weight:300}
.lat em{letter-spacing:1.1px}
.combo,.combo .lat{font-weight:300}
.w153{width:153px}.w449{width:449px}.w159{width:159px}.w371{width:371px}.w90{width:90px}
.inp{height:27px;border:1px solid #aaa;border-radius:3px;background:#fff;padding-left:2px;line-height:26px;font-weight:400}
.inp em{letter-spacing:4.5px}
.ramp{width:353px;height:27px;border:1px solid #aaa;border-radius:3px;background:#fcfcfc;padding:2px 4px}
.ramp i{display:block;height:21px;background:linear-gradient(90deg,#440154,#482475 13%,#414487 26%,#355f8d 35%,#21908d 50%,#22a884 60%,#43bf71 70%,#7ad151 80%,#bddf26 90%,#fde725)}
.rbtn{width:18px;height:27px;border:1px solid #aaa;border-radius:3px;background:linear-gradient(#fff,#ededed);display:flex;align-items:center;justify-content:center}
.table{margin-left:20px;width:565px;height:250px;border:1px solid #b0b0b0;background:#fff;display:flex;overflow:hidden}
.cols{flex:1;overflow:hidden}
.thead,.trow{display:grid;grid-template-columns:149px 89px 1fr}
.thead{height:31px;border-bottom:1px solid #b0b0b0;background:linear-gradient(#fff,#f0f0f0);line-height:32px}
.thead span{padding-left:3px;border-left:1px solid #ccc}
.thead span:first-child{border:0}
.trow{height:76px;align-items:center;font-family:"Noto Sans",sans-serif;font-size:18.2px;font-weight:400;color:#000;letter-spacing:.35px}
.trow span:first-child{padding-left:33px}
.trow span:last-child{color:#999;padding-left:4px}
.trow i{width:72px;height:72px;border-radius:12px;margin:-2px 0 0 9px}
.spin{width:62px;height:27px;border:1px solid #aaa;border-radius:3px;display:flex;color:#999;background:#f3f3f3}
.spin span{width:40px;padding-left:4px;border-right:1px solid #aaa;background:#ededed}
.spin div{flex:1;display:flex;flex-direction:column;align-items:center;justify-content:center;gap:1px;opacity:.55}
.spin svg{width:11px;height:10px}
.btn{width:39px;height:33px;border:1px solid #aaa;border-radius:3px;background:linear-gradient(#fff,#ededed);display:flex;align-items:center;justify-content:center}
.btn.txt{width:80px;height:29px}
.btn svg{width:24px;height:24px;margin-top:-1px}
.cb{width:21px;height:21px;border:1px solid #b4b4b4;background:#fff;margin-right:8.5px}
.big{width:21px;margin:3px 0 1px}
.big b{padding-right:1px}
.th3{height:422px}
.foot{display:flex;gap:9px;padding:7px 2px 0 6px}
.foot i{width:80px;height:28px;border:1px solid #aaa;border-radius:3px;background:#fff}
.foot .push{margin-left:220px}
.foot .def{border-color:#4aa3e8}
.sidegrip{position:absolute;left:597px;top:634px;width:1px;height:16px;background:repeating-linear-gradient(#bbb 0 1px,transparent 1px 3px)}
.mark{position:absolute;border:3px solid #ee1c25}
.m1{left:418px;top:347px;width:209px;height:57px}
.m2{left:702px;top:293px;width:181px;height:50px}
.m3{left:796px;top:472px;width:426px;height:56px}
.m4{left:634px;top:814px;width:163px;height:50px}
.tooltip{position:absolute;left:548px;top:409px;width:64px;height:32px;border:1px solid #000;background:#ffffe1;box-shadow:3px 3px 3px rgba(0,0,0,.45);padding-left:4px;line-height:30px;font-size:18px}
```
